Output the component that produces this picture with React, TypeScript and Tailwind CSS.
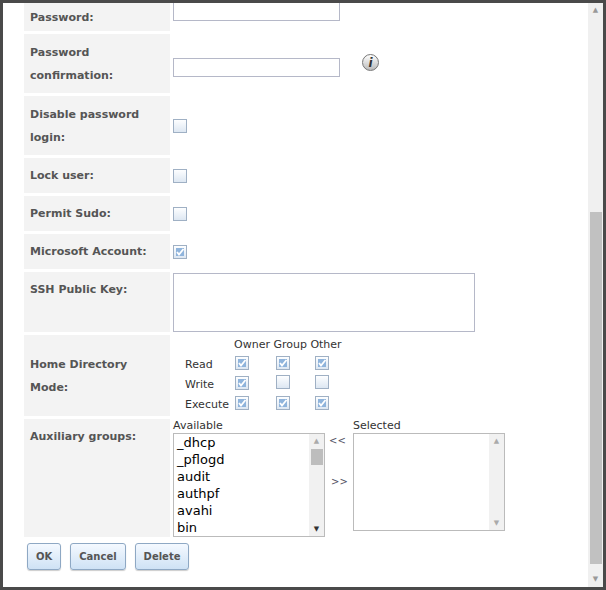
import React from 'react';

const Check = ({ on }: { on?: boolean }) => (
  <span className="inline-flex h-[14px] w-[14px] items-center justify-center border border-[#9fb0c4] bg-gradient-to-b from-[#fdfeff] to-[#dde7f2]">
    {on && (
      <svg width="10" height="10" viewBox="0 0 10 10">
        <rect x="1" y="1" width="8" height="8" fill="#8fb4dc" />
        <path d="M2 5 L4 7.5 L8.5 2" stroke="#fff" strokeWidth="1.8" fill="none" />
      </svg>
    )}
  </span>
);

const Row = ({ label, h, children }: { label: React.ReactNode; h: string; children?: React.ReactNode }) => (
  <div className={`flex ${h} mb-[3px]`}>
    <div className="w-[146px] shrink-0 bg-[#f3f3f3] px-[6px] flex items-center text-[11px] font-bold leading-[23px] text-[#555]">
      <div>{label}</div>
    </div>
    <div className="flex-1 pl-[3px] flex items-center">{children}</div>
  </div>
);

const Btn = ({ children }: { children: React.ReactNode }) => (
  <button className="h-[27px] rounded-[3px] border border-[#8ea8c4] bg-gradient-to-b from-[#f4f9ff] to-[#cfe2f5] px-[8px] text-[10px] font-bold text-[#555] shadow-[0_1px_1px_rgba(0,0,0,0.2)]">
    {children}
  </button>
);

const groups = ['_dhcp', '_pflogd', 'audit', 'authpf', 'avahi', 'bin'];

export default function App() {
  return (
    <div className="h-[590px] w-[606px] bg-[#4a4a4a] p-[3px] font-[DejaVu_Sans,Verdana,sans-serif]">
      <div className="flex h-full bg-white">
        <div className="flex-1 pl-[21px] overflow-hidden">
          <Row label="Password:" h="h-[28px]">
            <input className="h-[19px] w-[167px] border border-[#b5b8c8] -mt-[11px]" />
          </Row>
          <Row label={<>Password<br />confirmation:</>} h="h-[59px]">
            <input className="h-[19px] w-[167px] border border-[#b5b8c8] mt-[8px]" />
            <span className="ml-[22px] mt-[-2px] inline-flex h-[17px] w-[17px] items-center justify-center rounded-full border border-[#777] bg-gradient-to-b from-white to-[#bbb] font-['Liberation_Serif',serif] text-[12px] font-bold italic text-[#333]">i</span>
          </Row>
          <Row label={<>Disable password<br />login:</>} h="h-[59px]"><Check /></Row>
          <Row label="Lock user:" h="h-[35px]"><Check /></Row>
          <Row label="Permit Sudo:" h="h-[35px]"><Check /></Row>
          <Row label="Microsoft Account:" h="h-[35px]"><Check on /></Row>
          <Row label="SSH Public Key:" h="h-[60px] [&>div:first-child]:items-start [&>div:first-child]:pt-[6px]">
            <textarea className="h-[59px] w-[302px] border border-[#b5b8c8] self-start mt-[1px] resize-none" />
          </Row>
          <Row label={<>Home Directory<br />Mode:</>} h="h-[81px]">
            <div className="self-start text-[11px] text-[#333] leading-[20px] ml-[12px]">
              <div className="pl-[49px]">Owner Group Other</div>
              {[['Read', true, true, true], ['Write', true, false, false], ['Execute', true, true, true]].map((r) => (
                <div key={r[0] as string} className="flex items-center h-[20px]">
                  <span className="w-[50px]">{r[0]}</span>
                  <span className="w-[41px]"><Check on={r[1] as boolean} /></span>
                  <span className="w-[39px]"><Check on={r[2] as boolean} /></span>
                  <span><Check on={r[3] as boolean} /></span>
                </div>
              ))}
            </div>
          </Row>
          <Row label="Auxiliary groups:" h="h-[118px] [&>div:first-child]:items-start [&>div:first-child]:pt-[6px]">
            <div className="self-start flex text-[11px] text-[#333]">
              <div>
                <div className="leading-[14px]">Available</div>
                <div className="flex h-[104px] w-[152px] border border-[#bbb]">
                  <div className="flex-1 pl-[3px] text-[13px] leading-[17px] text-black font-['Liberation_Sans',sans-serif]">
                    {groups.map((g) => <div key={g}>{g}</div>)}
                  </div>
                  <div className="w-[15px] bg-[#f1f1f1] flex flex-col items-center">
                    <span className="text-[7px] text-[#aaa] mt-[2px]">▲</span>
                    <div className="w-[12px] h-[16px] bg-[#bdbdbd] mt-[2px]" />
                    <span className="text-[7px] text-[#333] mt-auto mb-[2px]">▼</span>
                  </div>
                </div>
              </div>
              <div className="w-[28px] text-[10px] text-[#556] pt-[14px] pl-[4px]">
                <div>&lt;&lt;</div>
                <div className="mt-[26px] pl-[2px]">&gt;&gt;</div>
              </div>
              <div>
                <div className="leading-[14px]">Selected</div>
                <div className="flex h-[98px] w-[152px] border border-[#bbb]">
                  <div className="flex-1" />
                  <div className="w-[15px] bg-[#f1f1f1] flex flex-col items-center">
                    <span className="text-[7px] text-[#aaa] mt-[2px]">▲</span>
                    <span className="text-[7px] text-[#aaa] mt-auto mb-[2px]">▼</span>
                  </div>
                </div>
              </div>
            </div>
          </Row>
          <div className="flex gap-[9px] pl-[3px] pt-[3px]">
            <Btn>OK</Btn>
            <Btn>Cancel</Btn>
            <Btn>Delete</Btn>
          </div>
        </div>
        <div className="w-[15px] bg-[#f0f0f0] flex flex-col items-center">
          <span className="text-[7px] text-[#999] mt-[2px]">▲</span>
          <div className="w-[12px] h-[352px] bg-[#c1c1c1] mt-[196px]" />
          <span className="text-[7px] text-[#999] mt-auto mb-[3px]">▼</span>
        </div>
      </div>
    </div>
  );
}
